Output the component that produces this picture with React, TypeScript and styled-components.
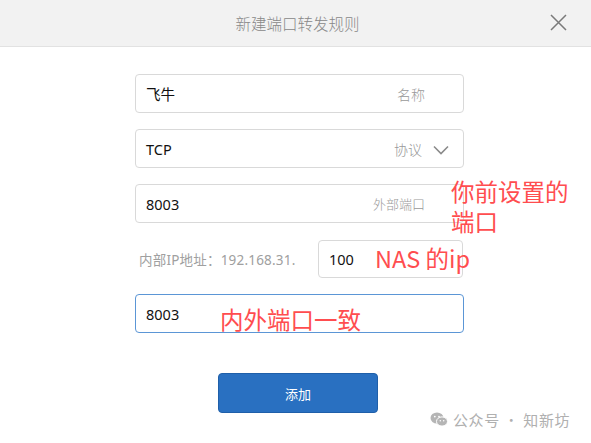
import React from "react";
import styled, { createGlobalStyle } from "styled-components";

const GlobalStyle = createGlobalStyle`
  html, body {
    margin: 0;
    padding: 0;
    background: #fff;
    font-family: "Noto Sans", "Noto Sans CJK SC", sans-serif;
  }
`;

const App: React.FC = () => {
  return (
    <>
      <GlobalStyle />
      <Page>
        <Header>
          <Title>新建端口转发规则</Title>
          <CloseBtn>
            <svg width="17" height="17" viewBox="0 0 17 17">
              <path d="M1 1 L16 16 M16 1 L1 16" stroke="#7a7a7a" strokeWidth="1.5" fill="none" />
            </svg>
          </CloseBtn>
        </Header>
        <Form>
          <Field>
            <Value>飞牛</Value>
            <Suffix>名称</Suffix>
          </Field>
          <Field>
            <Value>TCP</Value>
            <Suffix>
              协议
              <Chevron width="16" height="10" viewBox="0 0 16 10">
                <path d="M1 1.5 L8 8.5 L15 1.5" stroke="#8a8a8a" strokeWidth="1.6" fill="none" />
              </Chevron>
            </Suffix>
          </Field>
          <Field>
            <Value>8003</Value>
            <Suffix $small>外部端口</Suffix>
            <Note $top={-8} $left={315}>你前设置的</Note>
            <Note $top={22} $left={315}>端口</Note>
          </Field>
          <IpRow>
            <IpLabel>内部IP地址：192.168.31.</IpLabel>
            <IpInput>
              <Value>100</Value>
              <Note $top={3} $left={56}>NAS 的ip</Note>
            </IpInput>
          </IpRow>
          <Field $active>
            <Value>8003</Value>
            <Note $top={10} $left={84}>内外端口一致</Note>
          </Field>
          <ButtonRow>
            <AddButton>添加</AddButton>
          </ButtonRow>
        </Form>
        <Watermark>
          <svg width="18" height="15" viewBox="0 0 18 15">
            <ellipse cx="7" cy="6" rx="6.5" ry="5.5" fill="#b5b5b5" />
            <ellipse cx="12" cy="9.5" rx="5.5" ry="4.6" fill="#b5b5b5" stroke="#fff" strokeWidth="1" />
            <circle cx="4.8" cy="4.6" r="0.9" fill="#fff" />
            <circle cx="9" cy="4.6" r="0.9" fill="#fff" />
            <circle cx="10.3" cy="8.8" r="0.75" fill="#fff" />
            <circle cx="13.7" cy="8.8" r="0.75" fill="#fff" />
          </svg>
          <span>公众号 <Dot>·</Dot> 知新坊</span>
        </Watermark>
      </Page>
    </>
  );
};

const Page = styled.div`
  position: relative;
  width: 591px;
  height: 443px;
  overflow: hidden;
  background: #fff;
`;

const Header = styled.div`
  height: 46px;
  background: #f2f2f2;
  border-bottom: 1px solid #e2e2e2;
  display: flex;
  align-items: center;
  justify-content: center;
  position: relative;
`;

const Title = styled.div`
  font-family: "Noto Sans CJK SC", sans-serif;
  font-size: 15.5px;
  font-weight: 300;
  color: #888;
  margin-left: 4px;
`;

const CloseBtn = styled.div`
  position: absolute;
  right: 24px;
  top: 14px;
  display: flex;
`;

const Form = styled.div`
  width: 329px;
  margin: 27px 0 0 135px;
  display: flex;
  flex-direction: column;
  gap: 16px;
`;

const Field = styled.div<{ $active?: boolean }>`
  position: relative;
  height: 37px;
  border: 1px solid ${({ $active }) => ($active ? "#5b96d6" : "#d9d9d9")};
  border-radius: 4px;
  display: flex;
  align-items: center;
  justify-content: space-between;
  padding: 0 14px 0 10px;
`;

const Value = styled.span`
  font-family: "Noto Sans", "Noto Sans CJK SC", sans-serif;
  font-size: 14.5px;
  color: #111;
`;

const Suffix = styled.span<{ $small?: boolean }>`
  font-family: "Noto Sans CJK SC", sans-serif;
  font-size: ${({ $small }) => ($small ? "13px" : "14px")};
  font-weight: 300;
  color: #999;
  display: flex;
  align-items: center;
  margin-right: 24px;
  &:has(svg) {
    margin-right: 0;
  }
`;

const Chevron = styled.svg`
  margin-left: 11px;
  margin-top: 2px;
`;

const IpRow = styled.div`
  display: flex;
  align-items: center;
  justify-content: space-between;
  padding-left: 4px;
  margin-top: 1px;
`;

const IpLabel = styled.span`
  font-family: "Noto Sans", "Noto Sans CJK SC", sans-serif;
  font-size: 13.5px;
  letter-spacing: 0.2px;
  color: #a0a0a0;
`;

const IpInput = styled.div`
  position: relative;
  width: 133px;
  height: 36px;
  border: 1px solid #d9d9d9;
  border-radius: 4px;
  display: flex;
  align-items: center;
  padding-left: 10px;
  margin-right: 1px;
`;

const Note = styled.div<{ $top: number; $left: number }>`
  position: absolute;
  top: ${({ $top }) => $top}px;
  left: ${({ $left }) => $left}px;
  font-family: "Noto Sans CJK SC", sans-serif;
  font-size: 23.5px;
  line-height: 28px;
  color: #ff4d4f;
  white-space: nowrap;
`;

const ButtonRow = styled.div`
  display: flex;
  padding-left: 83px;
  margin-top: 24px;
`;

const AddButton = styled.button`
  width: 160px;
  height: 40px;
  background: #2970c1;
  border: 1px solid #1f5fa9;
  border-radius: 4px;
  color: #fff;
  font-family: "Noto Sans CJK SC", sans-serif;
  font-size: 13px;
  cursor: pointer;
`;

const Watermark = styled.div`
  position: absolute;
  left: 430px;
  top: 409px;
  display: flex;
  align-items: center;
  gap: 5px;
  font-family: "Noto Sans CJK SC", sans-serif;
  font-size: 15px;
  letter-spacing: 0.6px;
  color: #b0b0b0;
`;

const Dot = styled.span`
  font-weight: 300;
`;

export default App;
